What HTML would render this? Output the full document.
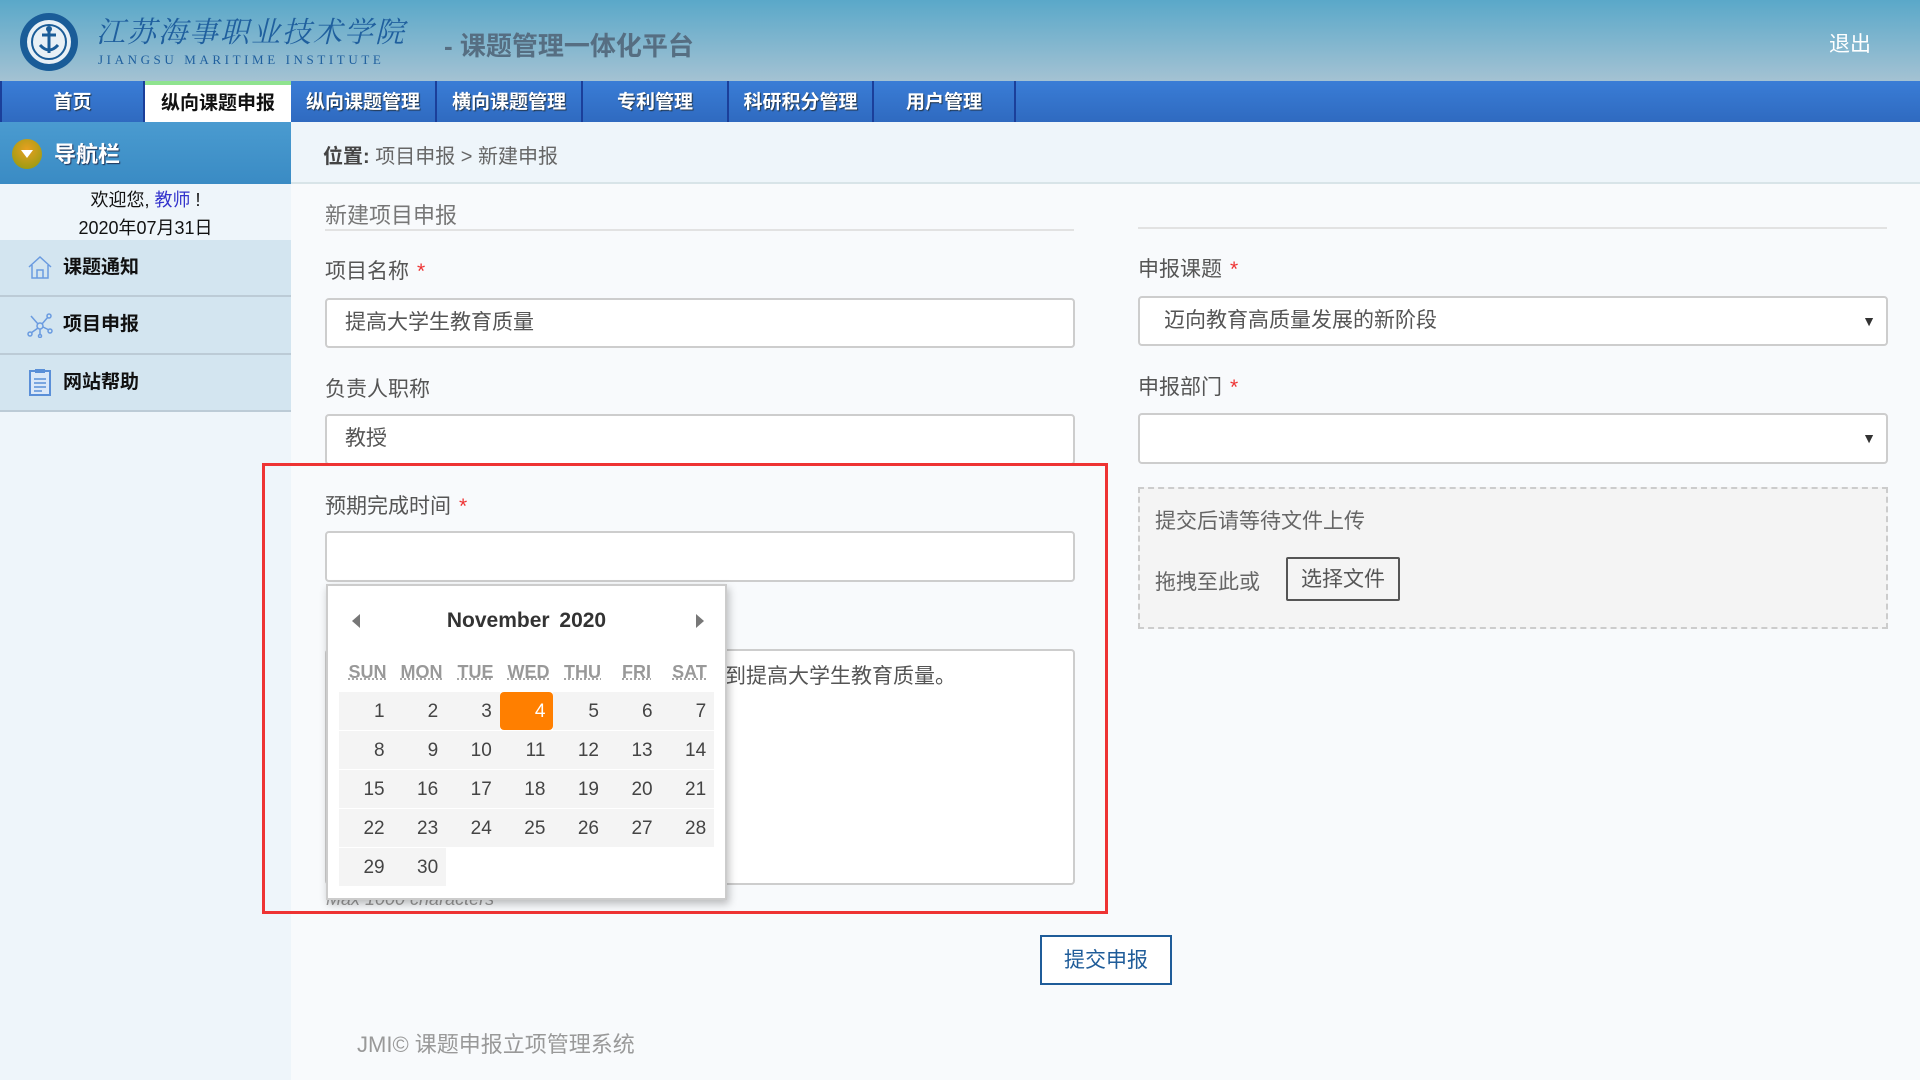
<!DOCTYPE html>
<html><head><meta charset="utf-8"><style>
*{box-sizing:border-box;margin:0;padding:0}
body{width:1920px;height:1080px;overflow:hidden;background:#f8fafc;font-family:"Liberation Sans","Noto Sans CJK SC",sans-serif;position:relative;color:#555}
.abs{position:absolute}
#hdr{left:0;top:0;width:1920px;height:81px;background:linear-gradient(#5aa8c9,#a4c2d3)}
#nav{left:0;top:81px;width:1920px;height:41px;background:linear-gradient(#3a7dd6,#2f6ac0)}
.tab{position:absolute;top:0;height:41px;color:#fff;font-weight:bold;font-size:19px;text-align:center;line-height:43px;border-right:2px solid #1b3f9a;text-shadow:1px 1px 1px #234}
.tab.on{background:#fff;color:#111;border-top:4px solid #8fe38f;line-height:37px;text-shadow:none;border-right:none}
#side{left:0;top:122px;width:291px;height:958px;background:#eef5fa}
.mi{position:absolute;left:0;width:291px;background:#d3e5f0;border-bottom:2px solid #bccbd6;font-weight:bold;font-size:19px;color:#111}
.lbl{position:absolute;font-size:21px;color:#555}
.lbl b{color:#e33;font-weight:normal;margin-left:8px}
.inp{position:absolute;background:#fff;border:2px solid #cdcdcd;border-radius:4px;font-size:21px;color:#555;padding-left:18px}
.dn{position:absolute;right:10px;top:0;font-size:14px;color:#333}
#cal{left:326px;top:584px;width:401px;height:316px;background:#fff;border:2px solid #ccc;box-shadow:2px 4px 8px rgba(0,0,0,.25)}
.dh{position:absolute;top:76px;font-size:18px;font-weight:bold;color:#999;text-decoration:underline dotted;width:53px;text-align:center}
.d{position:absolute;width:53.6px;height:38px;background:#f4f4f4;font-size:19px;color:#444;text-align:right;padding-right:8px;line-height:40px}
</style></head><body>
<div id="hdr" class="abs">
  <svg class="abs" style="left:18px;top:11px" width="62" height="62" viewBox="0 0 62 62"><circle cx="31" cy="31" r="29" fill="#1a5c98"/><circle cx="31" cy="31" r="22" fill="#e8f0f6"/><circle cx="31" cy="31" r="17" fill="none" stroke="#1a5c98" stroke-width="2"/><path d="M31 18v24M24 24h14M22 34q9 10 18 0" stroke="#1a5c98" stroke-width="3" fill="none"/><circle cx="31" cy="18" r="3" fill="#1a5c98"/></svg>
  <div class="abs" style="left:96px;top:10px;font-family:'Liberation Serif','Noto Serif CJK SC',serif;font-style:italic;font-size:29px;color:#1f5f9e;letter-spacing:2px;white-space:nowrap">江苏海事职业技术学院</div>
  <div class="abs" style="left:98px;top:52px;font-family:'Liberation Serif',serif;font-size:13px;color:#1f5f9e;letter-spacing:3.6px;white-space:nowrap">JIANGSU MARITIME INSTITUTE</div>
  <div class="abs" style="left:444px;top:26px;font-size:26px;font-weight:bold;color:#566e82">- 课题管理一体化平台</div>
  <div class="abs" style="left:1829px;top:28px;font-size:21px;color:#fff">退出</div>
</div>
<div id="nav" class="abs">
  <div class="tab" style="left:0;width:145px;border-left:2px solid #1b3f9a">首页</div>
  <div class="tab on" style="left:145px;width:146px">纵向课题申报</div>
  <div class="tab" style="left:291px;width:146px">纵向课题管理</div>
  <div class="tab" style="left:437px;width:146px">横向课题管理</div>
  <div class="tab" style="left:583px;width:146px">专利管理</div>
  <div class="tab" style="left:729px;width:145px">科研积分管理</div>
  <div class="tab" style="left:874px;width:142px">用户管理</div>
</div>
<div id="side" class="abs">
  <div class="abs" style="left:0;top:0;width:291px;height:62px;background:linear-gradient(#4a9bd0,#3a8bc4)">
    <div class="abs" style="left:12px;top:17px;width:30px;height:30px;border-radius:50%;background:radial-gradient(circle at 50% 35%,#e8a020,#8a9a10)"></div>
    <div class="abs" style="left:21px;top:28px;width:0;height:0;border-left:6px solid transparent;border-right:6px solid transparent;border-top:8px solid #fff"></div>
    <div class="abs" style="left:54px;top:15px;color:#fff;font-weight:bold;font-size:22px;text-shadow:1px 1px 1px #235">导航栏</div>
  </div>
  <div class="abs" style="left:0;top:64px;width:291px;text-align:center;font-size:18px;color:#111;line-height:28px">欢迎您, <span style="color:#3333cc">教师</span> !<br>2020年07月31日</div>
  <div class="mi" style="top:118px;height:57px;line-height:55px;padding-left:63px">课题通知</div>
  <div class="mi" style="top:175px;height:58px;line-height:56px;padding-left:63px">项目申报</div>
  <div class="mi" style="top:233px;height:57px;line-height:55px;padding-left:63px">网站帮助</div>
  <svg class="abs" style="left:27px;top:132px" width="26" height="26" viewBox="0 0 26 26" fill="none" stroke="#6a9be0" stroke-width="1.5"><path d="M2 13L13 3l11 10M5 11v13h16V11M10 24v-8h6v8"/></svg>
  <svg class="abs" style="left:27px;top:190px" width="26" height="26" viewBox="0 0 26 26" fill="none" stroke="#6a9be0" stroke-width="1.5"><circle cx="13" cy="14" r="3"/><circle cx="22" cy="4" r="2"/><circle cx="3" cy="22" r="2"/><circle cx="23" cy="19" r="2"/><circle cx="13" cy="24" r="1.5"/><path d="M4 4l7 8M15 12l6-7M11 16l-7 5M16 15l6 3M13 17v6"/></svg>
  <svg class="abs" style="left:29px;top:246px" width="22" height="28" viewBox="0 0 22 28"><rect x="1" y="3" width="20" height="24" fill="#dbe8f8" stroke="#5a8fd8" stroke-width="2"/><rect x="6" y="1" width="10" height="4" fill="#5a8fd8"/><path d="M5 11h12M5 15h12M5 19h12M5 23h8" stroke="#5a8fd8" stroke-width="1.5"/></svg>
</div>
<div class="abs" style="left:291px;top:122px;width:1629px;height:62px;background:#eef5fa;border-bottom:2px solid #d8e4e8"></div>
<div class="abs" style="left:323px;top:140px;font-size:20px;color:#666"><b style="color:#444">位置:</b> 项目申报 &gt; 新建申报</div>
<div class="abs" style="left:325px;top:198px;font-size:22px;color:#777">新建项目申报</div>
<div class="abs" style="left:325px;top:229px;width:749px;height:2px;background:#e2e2e2"></div>
<div class="abs" style="left:1138px;top:227px;width:749px;height:2px;background:#e2e2e2"></div>

<div class="lbl" style="left:325px;top:255px">项目名称<b>*</b></div>
<div class="inp" style="left:325px;top:298px;width:750px;height:50px;line-height:46px">提高大学生教育质量</div>
<div class="lbl" style="left:325px;top:373px">负责人职称</div>
<div class="inp" style="left:325px;top:414px;width:750px;height:51px;line-height:46px">教授</div>
<div class="lbl" style="left:325px;top:490px">预期完成时间<b>*</b></div>
<div class="inp" style="left:325px;top:531px;width:750px;height:51px"></div>
<div class="inp" style="left:325px;top:649px;width:750px;height:236px;padding:12px 0 0 20px;line-height:28px">本课题研究教学改革与创新方法，力求达到提高大学生教育质量。</div>
<div class="abs" style="left:326px;top:889px;font-size:18px;font-style:italic;color:#999">Max 1000 characters</div>

<div class="lbl" style="left:1138px;top:253px">申报课题<b>*</b></div>
<div class="inp" style="left:1138px;top:296px;width:750px;height:50px;line-height:46px;padding-left:24px">迈向教育高质量发展的新阶段<span class="dn" style="line-height:46px">▼</span></div>
<div class="lbl" style="left:1138px;top:371px">申报部门<b>*</b></div>
<div class="inp" style="left:1138px;top:413px;width:750px;height:51px;line-height:47px"><span class="dn" style="line-height:47px">▼</span></div>
<div class="abs" style="left:1138px;top:487px;width:750px;height:142px;background:#f4f4f4;border:2px dashed #ccc"></div>
<div class="abs" style="left:1155px;top:505px;font-size:21px;color:#666">提交后请等待文件上传</div>
<div class="abs" style="left:1155px;top:566px;font-size:21px;color:#666">拖拽至此或</div>
<div class="abs" style="left:1286px;top:557px;width:114px;height:44px;border:2px solid #555;border-radius:2px;font-size:21px;color:#555;text-align:center;line-height:42px">选择文件</div>

<div class="abs" style="left:262px;top:463px;width:846px;height:451px;border:3px solid #ee3333"></div>

<div id="cal" class="abs">
  <div class="abs" style="left:24px;top:28px;width:0;height:0;border-top:7px solid transparent;border-bottom:7px solid transparent;border-right:8px solid #777"></div>
  <div class="abs" style="left:368px;top:28px;width:0;height:0;border-top:7px solid transparent;border-bottom:7px solid transparent;border-left:8px solid #777"></div>
  <div class="abs" style="left:0;top:23px;width:397px;text-align:center;font-size:21px;font-weight:bold;color:#333;word-spacing:4px">November 2020</div>
  <div class="dh" style="left:13px">SUN</div><div class="dh" style="left:67px">MON</div><div class="dh" style="left:121px">TUE</div><div class="dh" style="left:174px">WED</div><div class="dh" style="left:228px">THU</div><div class="dh" style="left:282px">FRI</div><div class="dh" style="left:335px">SAT</div>
  <div id="g"></div>
</div>
<script>
(function(){var g=document.getElementById('g'),h='';for(var i=1;i<=30;i++){var c=(i-1)%7,r=Math.floor((i-1)/7);var l=11+c*53.6,t=106+r*39;var s=i==4?'background:#ff7f00;color:#fff;border-radius:4px;':'';h+='<div class="d" style="left:'+l+'px;top:'+t+'px;'+s+'">'+i+'</div>';}g.innerHTML=h;})();
</script>

<div class="abs" style="left:1040px;top:935px;width:132px;height:50px;border:2px solid #1f5c99;font-size:21px;color:#1f5c99;text-align:center;line-height:48px;background:#fff">提交申报</div>
<div class="abs" style="left:357px;top:1027px;font-size:22px;color:#999">JMI© 课题申报立项管理系统</div>
</body></html>
